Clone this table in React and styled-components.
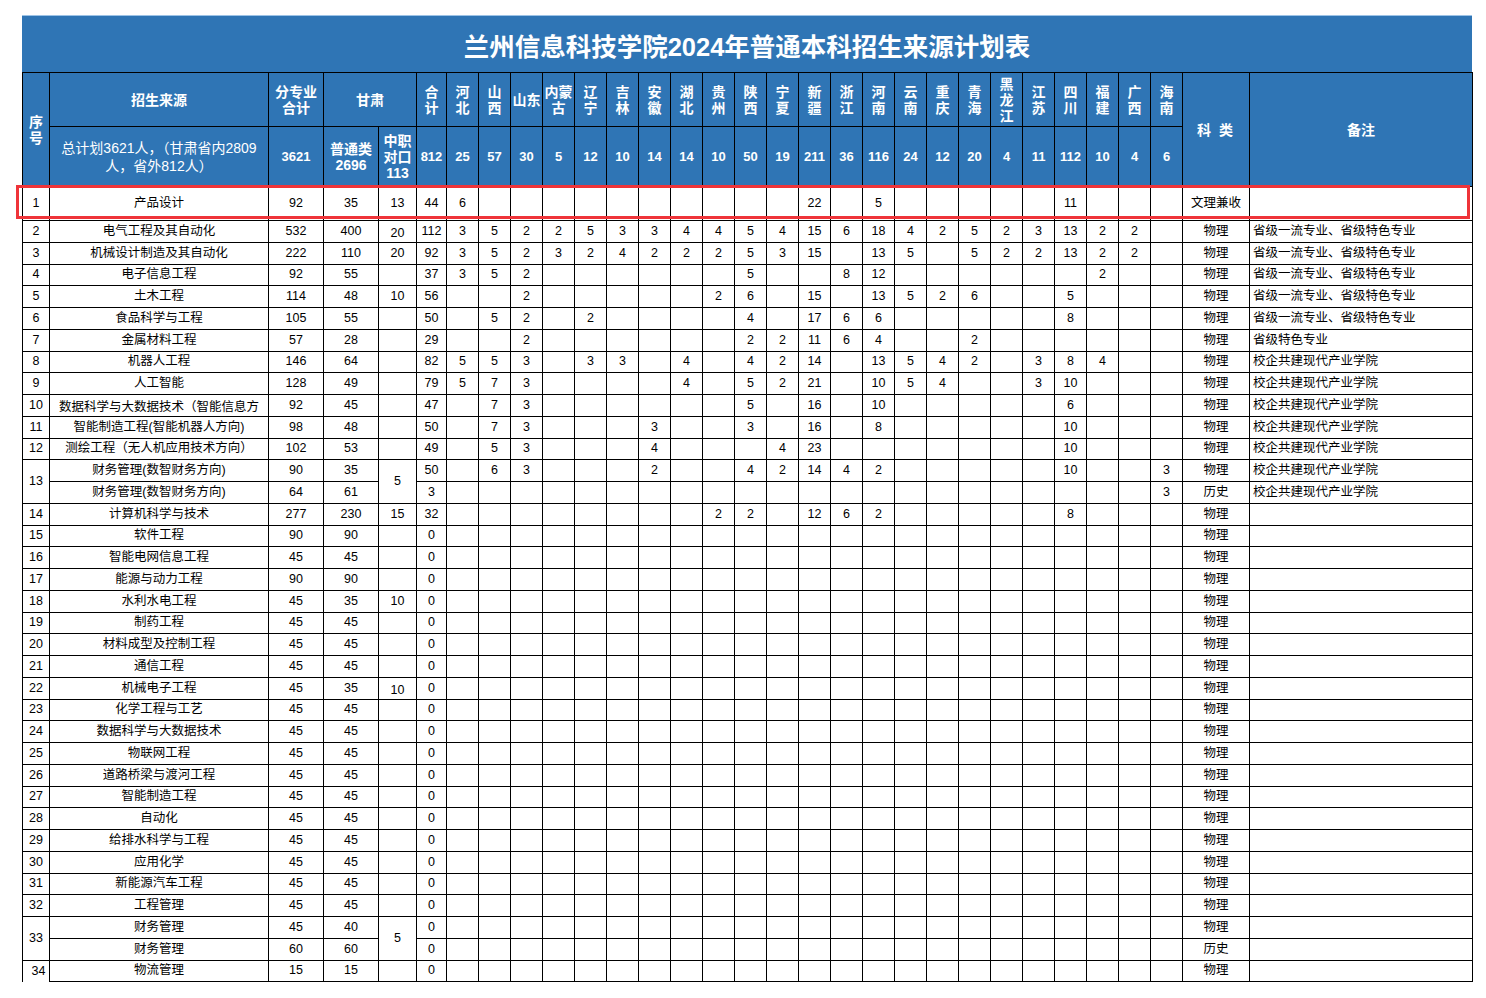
import React from 'react';
import styled, { createGlobalStyle } from 'styled-components';

const GlobalStyle = createGlobalStyle`
  html, body {
    margin: 0;
    padding: 0;
    background: #fff;
  }
  body {
    font-family: "Liberation Sans", "Noto Sans CJK SC", sans-serif;
    color: #000;
  }
`;

const HEAD_BLUE = '#2f75b5';

const Page = styled.div`
  padding: 15px 0 0 22px;
`;

const Sheet = styled.div`
  position: relative;
  width: 1450px;
`;

const Title = styled.div`
  height: 57px;
  box-sizing: border-box;
  border-top: 1px solid #9dc3e6;
  background: ${HEAD_BLUE};
  color: #fff;
  font-size: 25.5px;
  font-weight: 700;
  display: flex;
  align-items: center;
  justify-content: center;
  padding-top: 1px;
`;

const Table = styled.table`
  width: 1450px;
  border-collapse: collapse;
  table-layout: fixed;
`;

const HeadRow = styled.tr`
  height: ${(p) => p.$h}px;
`;

const Th = styled.th`
  background: ${HEAD_BLUE};
  color: #fff;
  border: 1px solid #000;
  padding: 0;
  text-align: center;
  vertical-align: middle;
  font-size: ${(p) => (p.$num ? 13 : 14)}px;
  font-weight: ${(p) => (p.$light ? 400 : 700)};
  line-height: ${(p) => (p.$light ? 18 : 16)}px;
  white-space: nowrap;
  letter-spacing: ${(p) => (p.$spaced ? '2px' : '0')};
`;

const Row = styled.tr`
  height: ${(p) => (p.$tall ? 34 : 21.75)}px;
`;

const Td = styled.td`
  border: 1px solid #000;
  border-bottom: ${(p) => (p.$open ? 'none' : '1px solid #000')};
  padding: ${(p) => (p.$align === 'left' ? '0 0 0 3px' : p.$low ? '5px 0 0' : '0')};
  text-align: ${(p) => (p.$align === 'left' ? 'left' : p.$align === 'right' ? 'right' : 'center')};
  vertical-align: middle;
  font-size: 12.5px;
  line-height: 15px;
  white-space: nowrap;
  overflow: hidden;
  color: #000;
`;

const Clip = styled.div`
  height: 19px;
  padding-top: 3px;
  box-sizing: border-box;
  overflow: hidden;
  white-space: normal;
  line-height: 16px;
`;

const Highlight = styled.div`
  position: absolute;
  left: -6px;
  top: 170px;
  width: 1454px;
  height: 34px;
  box-sizing: border-box;
  border: 3px solid #ef3439;
  pointer-events: none;
`;

const PROVINCES = [
  { name: '河北', label: ['河', '北'], total: 25 },
  { name: '山西', label: ['山', '西'], total: 57 },
  { name: '山东', label: ['山东'], total: 30 },
  { name: '内蒙古', label: ['内蒙', '古'], total: 5 },
  { name: '辽宁', label: ['辽', '宁'], total: 12 },
  { name: '吉林', label: ['吉', '林'], total: 10 },
  { name: '安徽', label: ['安', '徽'], total: 14 },
  { name: '湖北', label: ['湖', '北'], total: 14 },
  { name: '贵州', label: ['贵', '州'], total: 10 },
  { name: '陕西', label: ['陕', '西'], total: 50 },
  { name: '宁夏', label: ['宁', '夏'], total: 19 },
  { name: '新疆', label: ['新', '疆'], total: 211 },
  { name: '浙江', label: ['浙', '江'], total: 36 },
  { name: '河南', label: ['河', '南'], total: 116 },
  { name: '云南', label: ['云', '南'], total: 24 },
  { name: '重庆', label: ['重', '庆'], total: 12 },
  { name: '青海', label: ['青', '海'], total: 20 },
  { name: '黑龙江', label: ['黑', '龙', '江'], total: 4 },
  { name: '江苏', label: ['江', '苏'], total: 11 },
  { name: '四川', label: ['四', '川'], total: 112 },
  { name: '福建', label: ['福', '建'], total: 10 },
  { name: '广西', label: ['广', '西'], total: 4 },
  { name: '海南', label: ['海', '南'], total: 6 },
];

const NOTE_A = '省级一流专业、省级特色专业';
const NOTE_B = '校企共建现代产业学院';

// group: 'first' 行带合并的序号/中职格，'second' 行省略这两格
const ROWS = [
  { no: 1, name: '产品设计', total: 92, pt: 35, zz: 13, sum: 44, kind: '文理兼收', tall: true,
    p: { 河北: 6, 新疆: 22, 河南: 5, 四川: 11 } },
  { no: 2, name: '电气工程及其自动化', total: 532, pt: 400, zz: 20, zzLow: true, sum: 112, note: NOTE_A,
    p: { 河北: 3, 山西: 5, 山东: 2, 内蒙古: 2, 辽宁: 5, 吉林: 3, 安徽: 3, 湖北: 4, 贵州: 4, 陕西: 5, 宁夏: 4, 新疆: 15, 浙江: 6, 河南: 18, 云南: 4, 重庆: 2, 青海: 5, 黑龙江: 2, 江苏: 3, 四川: 13, 福建: 2, 广西: 2 } },
  { no: 3, name: '机械设计制造及其自动化', total: 222, pt: 110, zz: 20, sum: 92, note: NOTE_A,
    p: { 河北: 3, 山西: 5, 山东: 2, 内蒙古: 3, 辽宁: 2, 吉林: 4, 安徽: 2, 湖北: 2, 贵州: 2, 陕西: 5, 宁夏: 3, 新疆: 15, 河南: 13, 云南: 5, 青海: 5, 黑龙江: 2, 江苏: 2, 四川: 13, 福建: 2, 广西: 2 } },
  { no: 4, name: '电子信息工程', total: 92, pt: 55, sum: 37, note: NOTE_A,
    p: { 河北: 3, 山西: 5, 山东: 2, 陕西: 5, 浙江: 8, 河南: 12, 福建: 2 } },
  { no: 5, name: '土木工程', total: 114, pt: 48, zz: 10, sum: 56, note: NOTE_A,
    p: { 山东: 2, 贵州: 2, 陕西: 6, 新疆: 15, 河南: 13, 云南: 5, 重庆: 2, 青海: 6, 四川: 5 } },
  { no: 6, name: '食品科学与工程', total: 105, pt: 55, sum: 50, note: NOTE_A,
    p: { 山西: 5, 山东: 2, 辽宁: 2, 陕西: 4, 新疆: 17, 浙江: 6, 河南: 6, 四川: 8 } },
  { no: 7, name: '金属材料工程', total: 57, pt: 28, sum: 29, note: '省级特色专业',
    p: { 山东: 2, 陕西: 2, 宁夏: 2, 新疆: 11, 浙江: 6, 河南: 4, 青海: 2 } },
  { no: 8, name: '机器人工程', total: 146, pt: 64, sum: 82, note: NOTE_B,
    p: { 河北: 5, 山西: 5, 山东: 3, 辽宁: 3, 吉林: 3, 湖北: 4, 陕西: 4, 宁夏: 2, 新疆: 14, 河南: 13, 云南: 5, 重庆: 4, 青海: 2, 江苏: 3, 四川: 8, 福建: 4 } },
  { no: 9, name: '人工智能', total: 128, pt: 49, sum: 79, note: NOTE_B,
    p: { 河北: 5, 山西: 7, 山东: 3, 湖北: 4, 陕西: 5, 宁夏: 2, 新疆: 21, 河南: 10, 云南: 5, 重庆: 4, 江苏: 3, 四川: 10 } },
  { no: 10, name: '数据科学与大数据技术（智能信息方向）', clip: true, total: 92, pt: 45, sum: 47, note: NOTE_B,
    p: { 山西: 7, 山东: 3, 陕西: 5, 新疆: 16, 河南: 10, 四川: 6 } },
  { no: 11, name: '智能制造工程(智能机器人方向)', total: 98, pt: 48, sum: 50, note: NOTE_B,
    p: { 山西: 7, 山东: 3, 安徽: 3, 陕西: 3, 新疆: 16, 河南: 8, 四川: 10 } },
  { no: 12, name: '测绘工程（无人机应用技术方向）', total: 102, pt: 53, sum: 49, note: NOTE_B,
    p: { 山西: 5, 山东: 3, 安徽: 4, 宁夏: 4, 新疆: 23, 四川: 10 } },
  { no: 13, group: 'first', name: '财务管理(数智财务方向)', total: 90, pt: 35, zz: 5, sum: 50, note: NOTE_B,
    p: { 山西: 6, 山东: 3, 安徽: 2, 陕西: 4, 宁夏: 2, 新疆: 14, 浙江: 4, 河南: 2, 四川: 10, 海南: 3 } },
  { group: 'second', name: '财务管理(数智财务方向)', total: 64, pt: 61, sum: 3, kind: '历史', note: NOTE_B,
    p: { 海南: 3 } },
  { no: 14, name: '计算机科学与技术', total: 277, pt: 230, zz: 15, sum: 32,
    p: { 贵州: 2, 陕西: 2, 新疆: 12, 浙江: 6, 河南: 2, 四川: 8 } },
  { no: 15, name: '软件工程', total: 90, pt: 90, sum: 0 },
  { no: 16, name: '智能电网信息工程', total: 45, pt: 45, sum: 0 },
  { no: 17, name: '能源与动力工程', total: 90, pt: 90, sum: 0 },
  { no: 18, name: '水利水电工程', total: 45, pt: 35, zz: 10, sum: 0 },
  { no: 19, name: '制药工程', total: 45, pt: 45, sum: 0 },
  { no: 20, name: '材料成型及控制工程', total: 45, pt: 45, sum: 0 },
  { no: 21, name: '通信工程', total: 45, pt: 45, sum: 0 },
  { no: 22, name: '机械电子工程', total: 45, pt: 35, zz: 10, zzLow: true, sum: 0 },
  { no: 23, name: '化学工程与工艺', total: 45, pt: 45, sum: 0 },
  { no: 24, name: '数据科学与大数据技术', total: 45, pt: 45, sum: 0 },
  { no: 25, name: '物联网工程', total: 45, pt: 45, sum: 0 },
  { no: 26, name: '道路桥梁与渡河工程', total: 45, pt: 45, sum: 0 },
  { no: 27, name: '智能制造工程', total: 45, pt: 45, sum: 0 },
  { no: 28, name: '自动化', total: 45, pt: 45, sum: 0 },
  { no: 29, name: '给排水科学与工程', total: 45, pt: 45, sum: 0 },
  { no: 30, name: '应用化学', total: 45, pt: 45, sum: 0 },
  { no: 31, name: '新能源汽车工程', total: 45, pt: 45, sum: 0 },
  { no: 32, name: '工程管理', total: 45, pt: 45, sum: 0 },
  { no: 33, group: 'first', name: '财务管理', total: 45, pt: 40, zz: 5, sum: 0 },
  { group: 'second', name: '财务管理', total: 60, pt: 60, sum: 0, kind: '历史' },
  { no: 34, name: '物流管理', total: 15, pt: 15, sum: 0, last: true },
];

const COLS = [27, 219, 55, 55, 38, 30, ...PROVINCES.map(() => 32), 67, 223];

const Lines = ({ lines }) =>
  lines.map((l, i) => (
    <React.Fragment key={i}>
      {i > 0 && <br />}
      {l}
    </React.Fragment>
  ));

const DataRow = ({ row }) => {
  const provs = row.p || {};
  const isSecond = row.group === 'second';
  return (
    <Row $tall={row.tall}>
      {!isSecond && (
        <Td rowSpan={row.group === 'first' ? 2 : 1} $align={row.last ? 'right' : 'center'} $open={row.last}>
          {row.no}
          {row.last && '\u00a0'}
        </Td>
      )}
      <Td>{row.clip ? <Clip>{row.name}</Clip> : row.name}</Td>
      <Td>{row.total}</Td>
      <Td>{row.pt}</Td>
      {!isSecond && (
        <Td rowSpan={row.group === 'first' ? 2 : 1} $low={row.zzLow}>
          {row.zz ?? ''}
        </Td>
      )}
      <Td>{row.sum}</Td>
      {PROVINCES.map((pv) => (
        <Td key={pv.name}>{provs[pv.name] ?? ''}</Td>
      ))}
      <Td>{row.kind || '物理'}</Td>
      <Td $align="left">{row.note || ''}</Td>
    </Row>
  );
};

const App = () => (
  <Page>
    <GlobalStyle />
    <Sheet>
      <Title>兰州信息科技学院2024年普通本科招生来源计划表</Title>
      <Table>
        <colgroup>
          {COLS.map((w, i) => (
            <col key={i} style={{ width: w }} />
          ))}
        </colgroup>
        <thead>
          <HeadRow $h={54}>
            <Th rowSpan={2}>序<br />号</Th>
            <Th>招生来源</Th>
            <Th>分专业<br />合计</Th>
            <Th colSpan={2}>甘肃</Th>
            <Th>合<br />计</Th>
            {PROVINCES.map((pv) => (
              <Th key={pv.name}>
                <Lines lines={pv.label} />
              </Th>
            ))}
            <Th rowSpan={2} $spaced>科 类</Th>
            <Th rowSpan={2}>备注</Th>
          </HeadRow>
          <HeadRow $h={60}>
            <Th $light>总计划3621人，（甘肃省内2809<br />人，省外812人）</Th>
            <Th $num>3621</Th>
            <Th>普通类<br />2696</Th>
            <Th>中职<br />对口<br />113</Th>
            <Th $num>812</Th>
            {PROVINCES.map((pv) => (
              <Th key={pv.name} $num>{pv.total}</Th>
            ))}
          </HeadRow>
        </thead>
        <tbody>
          {ROWS.map((row, i) => (
            <DataRow key={i} row={row} />
          ))}
        </tbody>
      </Table>
      <Highlight />
    </Sheet>
  </Page>
);

export default App;
